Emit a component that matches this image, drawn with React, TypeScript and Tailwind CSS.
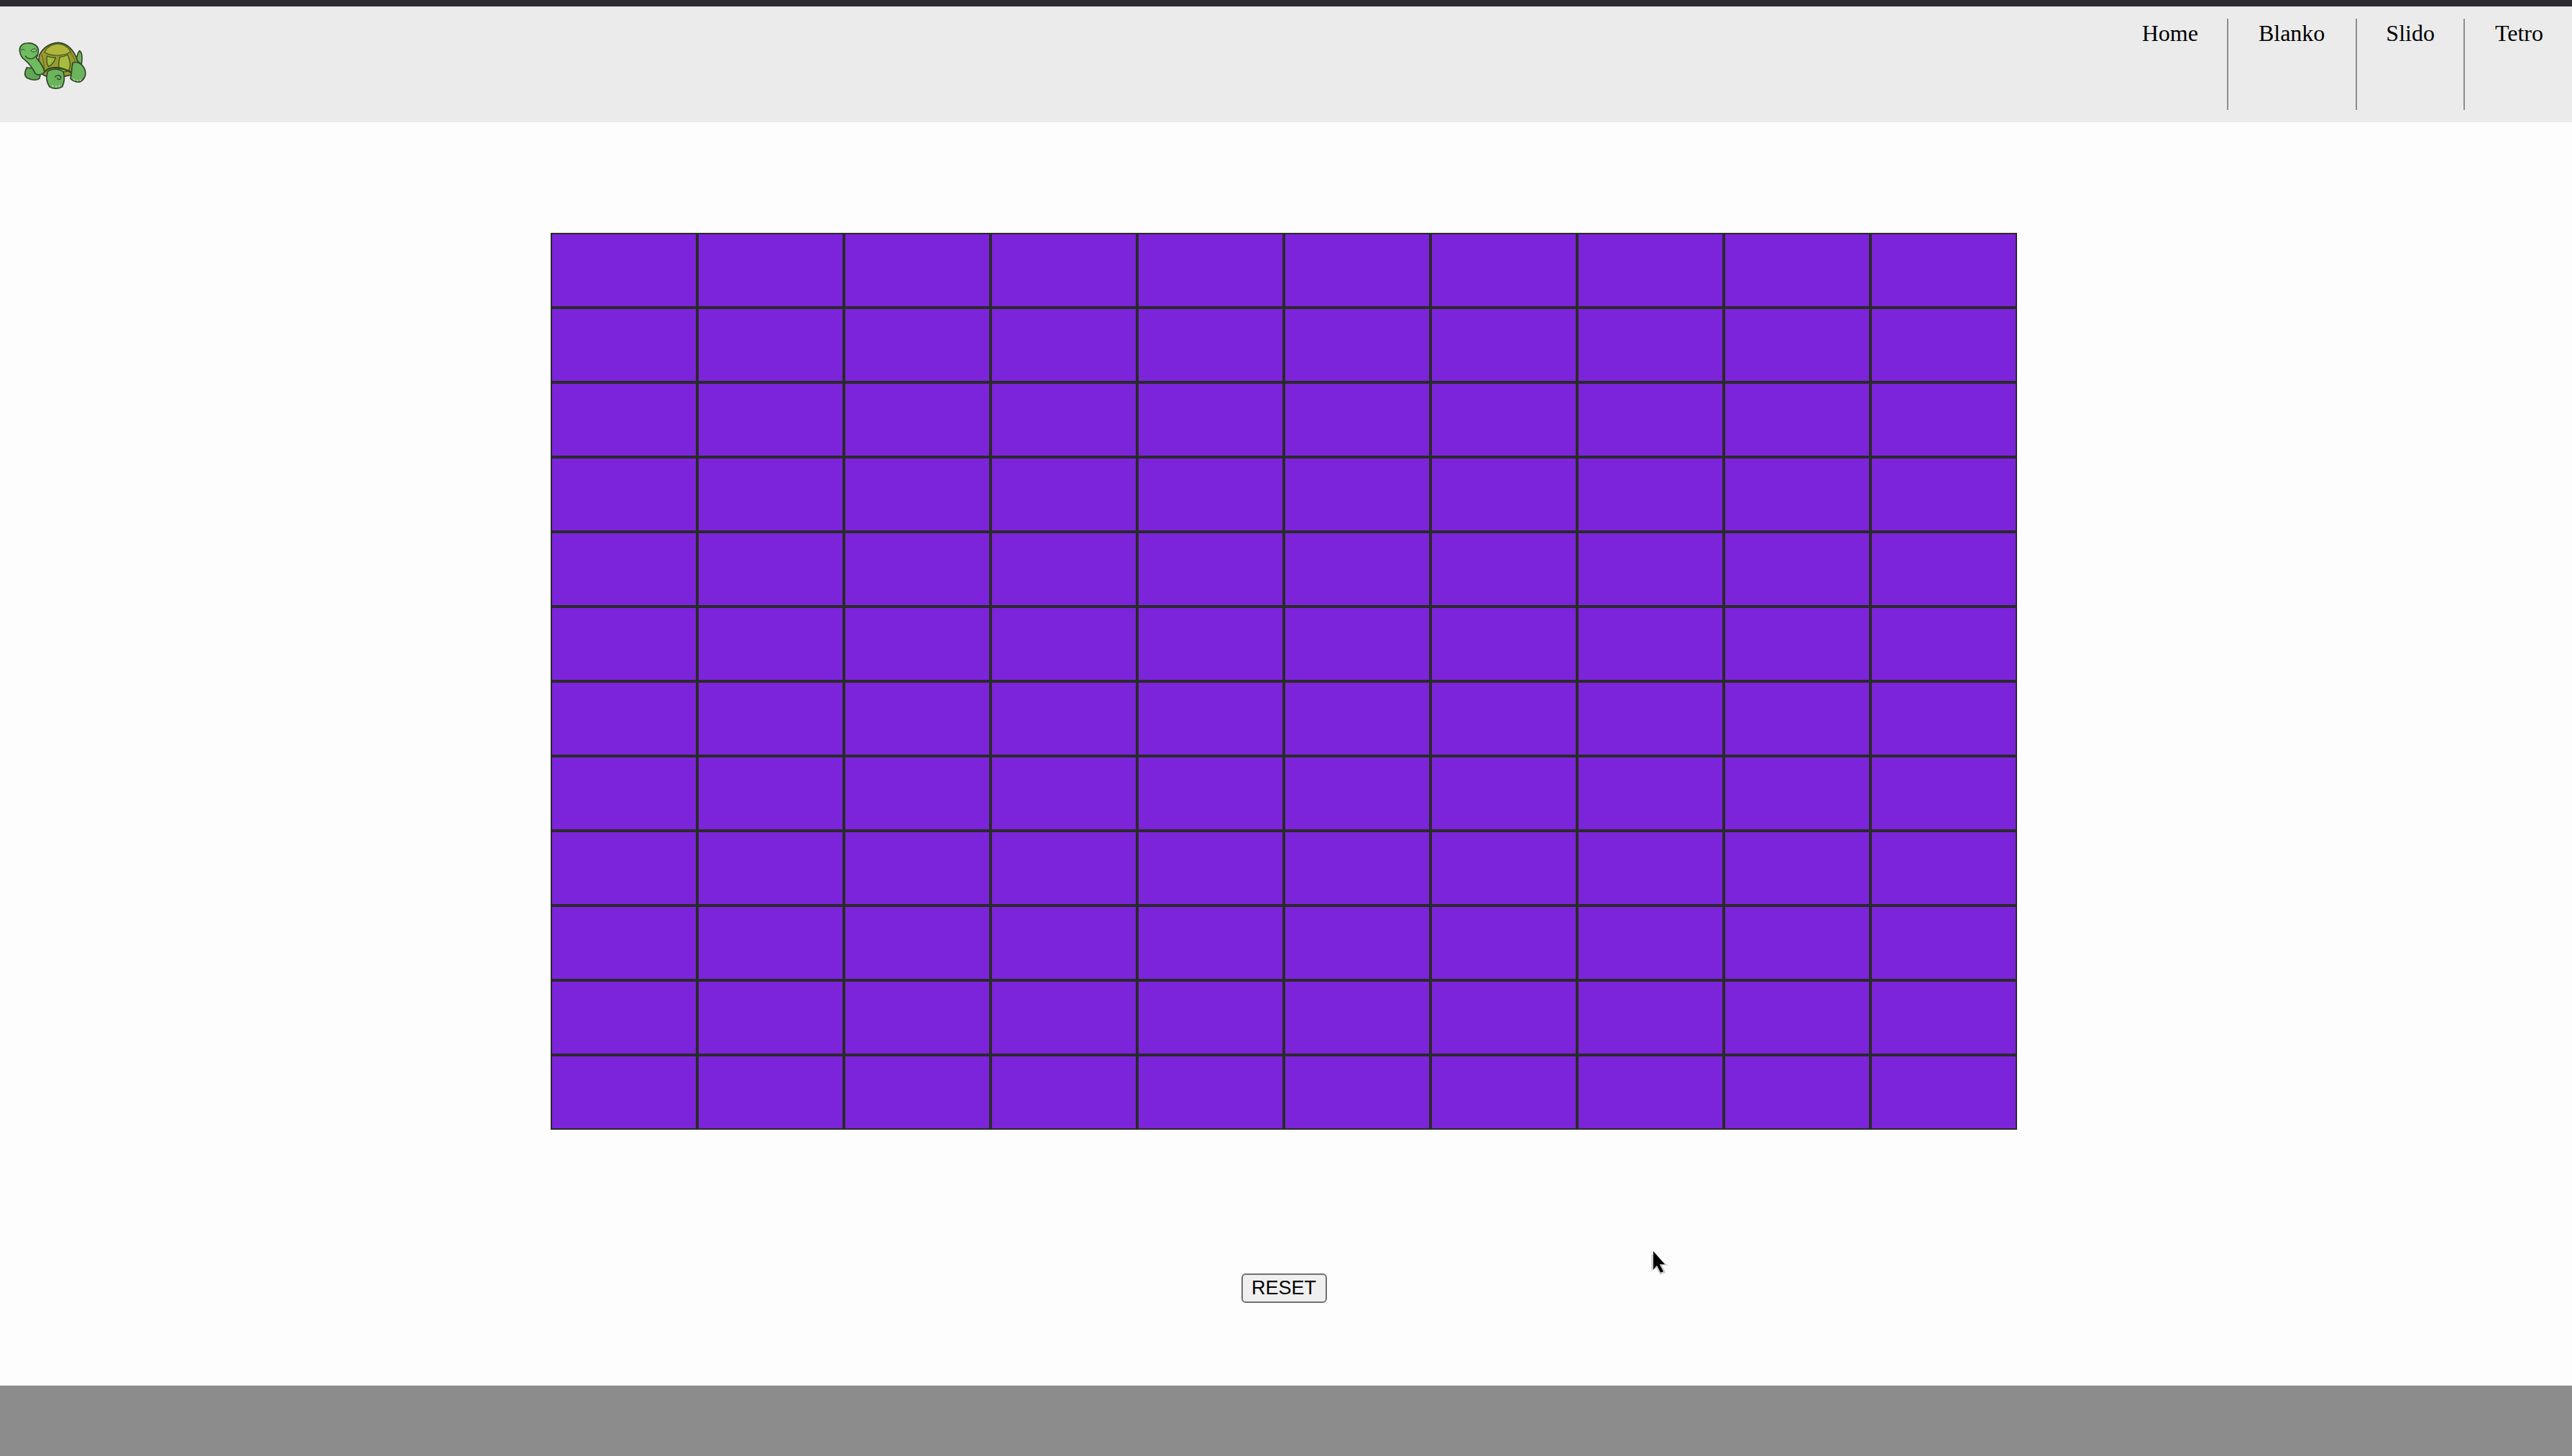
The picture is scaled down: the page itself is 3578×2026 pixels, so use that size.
const cells = Array.from({ length: 120 }, (_, i) => i);
const links = [
  { label: "Home", cls: "px-[40px] border-r-2" },
  { label: "Blanko", cls: "pl-[42px] pr-[43px] border-r-2" },
  { label: "Slido", cls: "px-[40px] border-r-2" },
  { label: "Tetro", cls: "pl-[42px] pr-[40px]" },
];

function Turtle() {
  const ink = "#33432a";
  return (
    <svg viewBox="0 0 330 240" className="w-[110px] h-[80px] shrink-0" fill="none" stroke={ink} strokeLinejoin="round" strokeLinecap="round">
      {/* tail */}
      <path d="M256 100 C262 85 266 68 272 62 C282 68 284 92 280 118 Z" fill="#74b458" strokeWidth="5" />
      {/* shell */}
      <path d="M104 80 C120 48 150 28 186 28 C222 30 250 62 262 100 C272 128 262 150 232 164 C190 176 130 180 112 154 C104 130 100 100 104 80 Z" fill="#9a9a30" strokeWidth="5" />
      <path d="M126 68 C138 42 164 32 188 33 C212 36 232 54 234 66 C205 86 152 86 126 68 Z" fill="#b0b63c" stroke="#4f5e20" strokeWidth="4" />
      <path d="M136 84 C150 90 160 92 172 90 C166 110 156 122 142 128 C134 114 134 98 136 84 Z" fill="#a0bb44" stroke="#3d5220" strokeWidth="4" />
      <path d="M190 88 C200 88 212 84 222 78 C232 100 236 125 228 142 C214 152 200 152 190 148 C184 128 184 106 190 88 Z" fill="#a8bc40" stroke="#3d5220" strokeWidth="4" />
      <path d="M114 78 C122 100 126 130 124 150" stroke="#55621f" strokeWidth="3" />
      <path d="M126 150 C150 122 200 130 244 156" stroke="#2f4a1d" strokeWidth="7" />
      <path d="M232 66 C248 88 258 112 260 136" stroke="#55621f" strokeWidth="3" />
      {/* far front leg */}
      <path d="M52 132 C42 150 40 165 52 175 C72 186 94 186 104 178 C110 165 108 150 100 138 Z" fill="#5fa854" strokeWidth="5" />
      {/* back leg */}
      <path d="M244 112 C262 104 284 116 294 140 C302 162 292 182 274 192 C258 194 240 186 234 178 C240 156 238 132 244 112 Z" fill="#69b45c" strokeWidth="5" />
      <path d="M248 180 L250 185 M262 184 L263 188 M276 183 L276 187" stroke="#cfe0b0" strokeWidth="4" />
      {/* head and neck */}
      <path d="M22 62 C20 44 34 30 54 30 C78 28 96 40 100 56 C102 72 96 84 92 92 C106 108 122 128 126 150 C118 162 100 166 88 158 C76 134 58 112 44 100 C30 92 24 78 22 62 Z" fill="#6fbb5f" strokeWidth="5" />
      <path d="M26 60 C32 54 40 54 44 60" strokeWidth="3" />
      <path d="M70 62 C74 52 88 50 94 60 C90 68 78 70 70 62 Z" fill="#7ec770" strokeWidth="3" />
      <path d="M46 84 C58 100 80 100 94 80" strokeWidth="4" />
      {/* near front leg */}
      <path d="M138 150 C150 136 188 134 204 150 C212 170 208 196 200 212 C186 222 160 222 146 212 C134 192 132 170 138 150 Z" fill="#69b45c" strokeWidth="5" />
      <path d="M170 172 C176 160 196 164 194 176 C192 184 180 184 180 176" strokeWidth="4" />
      <path d="M160 206 L161 212 M174 208 L174 214 M188 206 L187 212" stroke="#cfe0b0" strokeWidth="4" />
    </svg>
  );
}

export default function App() {
  return (
    <div className="relative flex flex-col h-[2026px] w-full bg-[#fdfdfd] overflow-hidden font-['Liberation_Serif',serif]">
      <div className="h-[9px] shrink-0 bg-[#2c2c30]" />
      <header className="h-[161px] shrink-0 bg-[#ebebeb] flex items-start justify-between">
        <div className="pl-[20px] pt-[41px]">
          <Turtle />
        </div>
        <nav className="flex pt-[17px]">
          {links.map((l) => (
            <a key={l.label} className={`h-[127px] pt-[2px] text-[32px] leading-[37px] text-black border-[#8d8d8d] ${l.cls}`}>
              {l.label}
            </a>
          ))}
        </nav>
      </header>
      <main className="flex-1 flex flex-col items-center pr-[6px] pt-[154px]">
        <div className="grid grid-cols-10 w-[2040px]">
          {cells.map((c) => (
            <div key={c} className="h-[104px] border-2 border-[#2a2a2a] bg-[#7b24d9]" />
          ))}
        </div>
        <button className="mt-[200px] w-[119px] h-[41px] rounded-[6px] border-2 border-[#6f6f6f] bg-[#efefef] text-black text-[27px] leading-none font-['Liberation_Sans',sans-serif]">
          RESET
        </button>
      </main>
      <footer className="h-[98px] shrink-0 bg-[#8c8c8c]" />
      <svg viewBox="90 30 120 150" className="absolute left-[2290px] top-[1730px] w-[40px] h-[50px]">
        <path d="M112 72 L112 146 L132 132 L148 162 L172 152 L156 122 L182 122 Z" fill="#9a9a9a" fillOpacity="0.45" />
        <path d="M120 63 L120 140 L135 122 L150 152 L162 148 L146 118 L168 118 Z" fill="#000" />
      </svg>
    </div>
  );
}
